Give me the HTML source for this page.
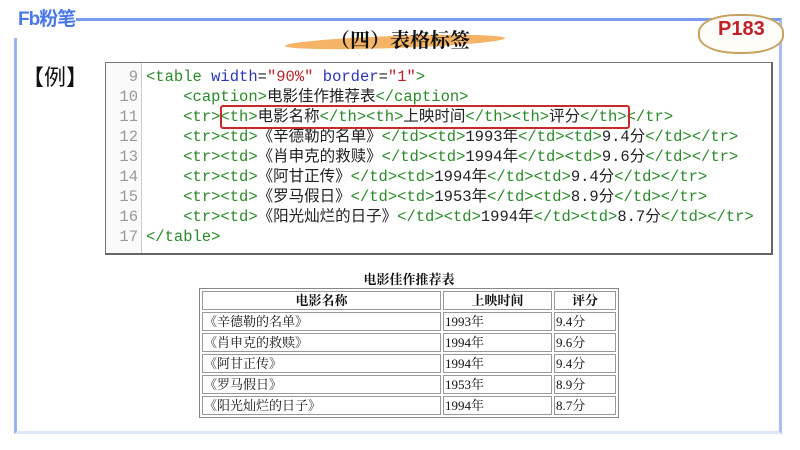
<!DOCTYPE html>
<html><head><meta charset="utf-8"><style>
body{margin:0;width:800px;height:450px;background:#fff;position:relative;overflow:hidden;font-family:"Liberation Sans","Noto Sans CJK SC",sans-serif}
.abs{position:absolute}
.code{left:105px;top:62px;width:665px;height:190px;border:1px solid #777;border-right:2px solid #666;border-bottom:2px solid #666;background:#fff;overflow:hidden}
.gut{left:0;top:0;width:35px;height:190px;border-right:1px solid #ccc;background:#fafafa}
.ln{position:absolute;left:0;width:32px;text-align:right;color:#999;font:15.5px/20px "Liberation Mono","Noto Sans CJK SC",monospace}
.cl{position:absolute;left:40px;white-space:pre;color:#222;font:15.5px/20px "Liberation Mono","Noto Sans CJK SC",monospace;height:20px}
.g{color:#2a8a2a}.b{color:#2a36b8}.r{color:#b8222a}
table.t{position:absolute;left:199px;top:288px;width:420px;border-collapse:separate;border-spacing:2px;border:1px solid #888;font:13px/17px "Liberation Serif","Noto Serif CJK SC",serif;color:#111}
table.t td,table.t th{border:1px solid #999;height:17px;line-height:17px;padding:0 1px;text-align:left}
table.t th{text-align:center}
</style></head><body>
<div class="abs" style="left:14px;top:18px;width:768px;height:416px;border:3px solid #7a9cf0;border-bottom-color:#dde6fb;border-left-color:#9ab4f2;border-right-color:#a9bff4;box-sizing:border-box"></div>
<div class="abs" style="left:0;top:0;width:76px;height:38px;background:#fff"></div>
<div class="abs" style="left:18px;top:8px;font-weight:bold;font-size:19px;line-height:24px;color:#4a78e8;letter-spacing:-1px">Fb粉笔</div>
<div class="abs" style="left:285px;top:36px;width:220px;height:12px;background:#f2a64a;border-radius:50%;opacity:.85;transform:rotate(-2deg)"></div>
<div class="abs" style="left:330px;top:26px;font-size:20px;line-height:26px;font-weight:bold;color:#111;font-family:'Noto Serif CJK SC',serif">（四）表格标签</div>
<div class="abs" style="left:698px;top:14px;width:82px;height:36px;border:2px solid #c8a060;border-radius:45%;background:#fffdf8"></div>
<div class="abs" style="left:718px;top:18px;font-size:20px;font-weight:bold;color:#c0202a">P183</div>
<div class="abs" style="left:22px;top:64px;font-size:22px;line-height:28px;color:#111">【例】</div>
<div class="abs code">
<div class="abs gut"></div>
<div class="ln" style="top:4px">9</div><div class="ln" style="top:24px">10</div><div class="ln" style="top:44px">11</div><div class="ln" style="top:64px">12</div><div class="ln" style="top:84px">13</div><div class="ln" style="top:104px">14</div><div class="ln" style="top:124px">15</div><div class="ln" style="top:144px">16</div><div class="ln" style="top:164px">17</div>
<div class="cl" style="top:4px"><span class="g">&lt;table</span> <span class="b">width</span>=<span class="r">"90%"</span> <span class="b">border</span>=<span class="r">"1"</span><span class="g">&gt;</span></div>
<div class="cl" style="top:24px">    <span class="g">&lt;caption&gt;</span>电影佳作推荐表<span class="g">&lt;/caption&gt;</span></div>
<div class="cl" style="top:44px">    <span class="g">&lt;tr&gt;&lt;th&gt;</span>电影名称<span class="g">&lt;/th&gt;&lt;th&gt;</span>上映时间<span class="g">&lt;/th&gt;&lt;th&gt;</span>评分<span class="g">&lt;/th&gt;&lt;/tr&gt;</span></div>
<div class="cl" style="top:64px">    <span class="g">&lt;tr&gt;&lt;td&gt;</span>《辛德勒的名单》<span class="g">&lt;/td&gt;&lt;td&gt;</span>1993年<span class="g">&lt;/td&gt;&lt;td&gt;</span>9.4分<span class="g">&lt;/td&gt;&lt;/tr&gt;</span></div>
<div class="cl" style="top:84px">    <span class="g">&lt;tr&gt;&lt;td&gt;</span>《肖申克的救赎》<span class="g">&lt;/td&gt;&lt;td&gt;</span>1994年<span class="g">&lt;/td&gt;&lt;td&gt;</span>9.6分<span class="g">&lt;/td&gt;&lt;/tr&gt;</span></div>
<div class="cl" style="top:104px">    <span class="g">&lt;tr&gt;&lt;td&gt;</span>《阿甘正传》<span class="g">&lt;/td&gt;&lt;td&gt;</span>1994年<span class="g">&lt;/td&gt;&lt;td&gt;</span>9.4分<span class="g">&lt;/td&gt;&lt;/tr&gt;</span></div>
<div class="cl" style="top:124px">    <span class="g">&lt;tr&gt;&lt;td&gt;</span>《罗马假日》<span class="g">&lt;/td&gt;&lt;td&gt;</span>1953年<span class="g">&lt;/td&gt;&lt;td&gt;</span>8.9分<span class="g">&lt;/td&gt;&lt;/tr&gt;</span></div>
<div class="cl" style="top:144px">    <span class="g">&lt;tr&gt;&lt;td&gt;</span>《阳光灿烂的日子》<span class="g">&lt;/td&gt;&lt;td&gt;</span>1994年<span class="g">&lt;/td&gt;&lt;td&gt;</span>8.7分<span class="g">&lt;/td&gt;&lt;/tr&gt;</span></div>
<div class="cl" style="top:164px;left:40px"><span class="g">&lt;/table&gt;</span></div>
</div>
<div class="abs" style="left:220px;top:105px;width:406px;height:20px;border:2px solid #c82a2a;border-radius:3px"></div>
<div class="abs" style="left:199px;top:271px;width:420px;text-align:center;font:bold 13px/17px 'Liberation Serif','Noto Serif CJK SC',serif;color:#111">电影佳作推荐表</div>
<table class="t">
<tr><th style="width:235px">电影名称</th><th style="width:105px">上映时间</th><th>评分</th></tr>
<tr><td>《辛德勒的名单》</td><td>1993年</td><td>9.4分</td></tr>
<tr><td>《肖申克的救赎》</td><td>1994年</td><td>9.6分</td></tr>
<tr><td>《阿甘正传》</td><td>1994年</td><td>9.4分</td></tr>
<tr><td>《罗马假日》</td><td>1953年</td><td>8.9分</td></tr>
<tr><td>《阳光灿烂的日子》</td><td>1994年</td><td>8.7分</td></tr>
</table>
</body></html>
